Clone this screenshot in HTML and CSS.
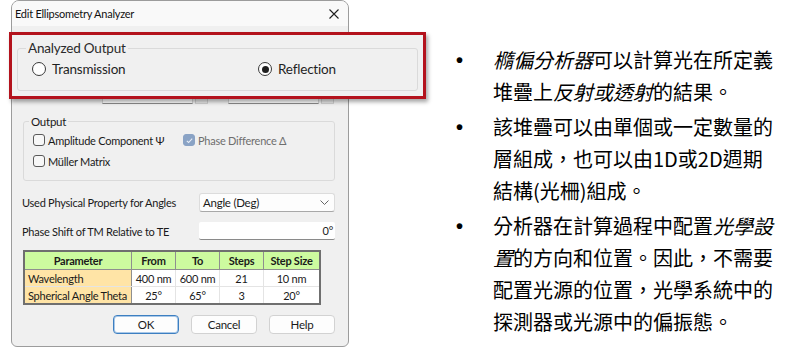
FILE: index.html
```html
<!DOCTYPE html>
<html lang="zh-Hant">
<head>
    <meta charset="UTF-8">
    <meta name="viewport" content="width=device-width, initial-scale=1.0">
    <title>Edit Ellipsometry Analyzer</title>
    <link rel="stylesheet" href="styles.css">
</head>
<body>
    <div class="page">
        <div class="dialog">
            <div class="titlebar">
                <span class="title">Edit Ellipsometry Analyzer</span>
                <svg class="close" width="10" height="10" viewBox="0 0 10 10">
                    <path d="M0.5 0.5 L9.5 9.5 M9.5 0.5 L0.5 9.5" stroke="#1f1f1f" stroke-width="1.1" fill="none"/>
                </svg>
            </div>
            <div class="dialog-body">
                <!-- row hidden behind the callout, only its lower edge shows -->
                <div class="hidden-row">
                    <div class="spin"><span class="spin-input"></span><span class="spin-btn"></span></div>
                    <div class="spin"><span class="spin-input"></span><span class="spin-btn"></span></div>
                </div>

                <fieldset class="group output-group">
                    <legend>Output</legend>
                    <div class="check-grid">
                        <div class="check"><span class="box"></span>Amplitude Component &Psi;</div>
                        <div class="check disabled">
                            <span class="box checked">
                                <svg width="9" height="9" viewBox="0 0 9 9"><path d="M1.8 4.8 L3.6 6.5 L7.2 2.6" stroke="#e8eef7" stroke-width="1.1" fill="none"/></svg>
                            </span>Phase Difference &Delta;
                        </div>
                        <div class="check"><span class="box"></span>Müller Matrix</div>
                    </div>
                </fieldset>

                <div class="prop-row combo-row">
                    <span>Used Physical Property for Angles</span>
                    <div class="combo">
                        <span>Angle (Deg)</span>
                        <svg width="9" height="5" viewBox="0 0 9 5"><path d="M0.5 0.5 L4.5 4.5 L8.5 0.5" stroke="#666" stroke-width="1" fill="none"/></svg>
                    </div>
                </div>
                <div class="prop-row text-row">
                    <span>Phase Shift of TM Relative to TE</span>
                    <div class="textbox">0°</div>
                </div>

                <table class="scan-table">
                    <thead>
                        <tr>
                            <th class="c-param">Parameter</th>
                            <th class="c-from">From</th>
                            <th class="c-to">To</th>
                            <th class="c-steps">Steps</th>
                            <th class="c-size">Step Size</th>
                        </tr>
                    </thead>
                    <tbody>
                        <tr>
                            <td>Wavelength</td>
                            <td>400 nm</td>
                            <td>600 nm</td>
                            <td>21</td>
                            <td>10 nm</td>
                        </tr>
                        <tr>
                            <td>Spherical Angle Theta</td>
                            <td>25°</td>
                            <td>65°</td>
                            <td>3</td>
                            <td>20°</td>
                        </tr>
                    </tbody>
                </table>

                <div class="buttons">
                    <button type="button" class="primary">OK</button>
                    <button type="button">Cancel</button>
                    <button type="button">Help</button>
                </div>
            </div>
        </div>

        <ul class="notes">
            <li><span><i>橢偏分析器</i>可以計算光在所定義<br>堆疊上<i>反射或透射</i>的結果。</span></li>
            <li><span>該堆疊可以由單個或一定數量的<br>層組成，也可以由1D或2D週期<br>結構(光柵)組成。</span></li>
            <li><span>分析器在計算過程中配置<i>光學設<br>置</i>的方向和位置。因此，不需要<br>配置光源的位置，光學系統中的<br>探測器或光源中的偏振態。</span></li>
        </ul>

        <!-- magnified callout over the dialog -->
        <div class="callout">
            <fieldset class="group analyzed-group">
                <legend>Analyzed Output</legend>
                <div class="radio-row">
                    <div class="radio"><span class="dot"></span>Transmission</div>
                    <div class="radio selected"><span class="dot"></span>Reflection</div>
                </div>
            </fieldset>
        </div>
    </div>
</body>
</html>
```

FILE: styles.css
```css
body {
    margin: 0;
    background-color: #fff;
    font-family: Lato, "Noto Sans", sans-serif;
    color: #1a1a1a;
}
.page {
    position: relative;
    display: flex;
    align-items: flex-start;
}

/* dialog */
.dialog {
    margin-left: 11px;
    width: 338px;
    height: 347px;
    box-sizing: border-box;
    border: 1px solid #9c9c9c;
    border-radius: 8px 8px 6px 6px;
    background-color: #f0f0f0;
    overflow: hidden;
    font-size: 11px;
    letter-spacing: -0.25px;
}
.titlebar {
    height: 25px;
    display: flex;
    align-items: center;
    justify-content: space-between;
    padding: 0 9px 0 3px;
    background-color: #f9f9f9;
}
.title {
    color: #111;
}
.close {
    display: block;
}
.dialog-body {
    padding: 0 13px 0 10px;
}
.hidden-row {
    margin-top: 58px;
    height: 20px;
    display: flex;
    gap: 20px;
    padding-left: 80px;
}
.spin {
    display: flex;
    gap: 2px;
}
.spin-input {
    width: 91px;
    height: 20px;
    box-sizing: border-box;
    background-color: #fff;
    border: 1px solid #d6d6d6;
    border-bottom-color: #8a8a8a;
}
.spin-btn {
    width: 13px;
    height: 20px;
    box-sizing: border-box;
    background-color: #e9e9e9;
    border: 1px solid #cfcfcf;
}

/* group boxes */
.group {
    margin: 0;
    border: 1px solid #dadada;
    border-radius: 3px;
}
.output-group {
    margin: 10px 0 0 1px;
    padding: 3px 8px 11px 9px;
}
.output-group legend {
    padding: 0 2px;
    margin-left: -4px;
    line-height: 15px;
    font-size: 11.5px;
}
.check-grid {
    display: grid;
    grid-template-columns: 150px auto;
    row-gap: 5px;
}
.check {
    display: flex;
    align-items: center;
    height: 16px;
    white-space: nowrap;
}
.box {
    width: 12px;
    height: 12px;
    box-sizing: border-box;
    border: 1px solid #5a5a5a;
    border-radius: 3px;
    background-color: #f7f7f7;
    margin-right: 3px;
    display: flex;
    align-items: center;
    justify-content: center;
}
.box.checked {
    border-color: #8aa3c5;
    background-color: #8aa3c5;
}
.check.disabled {
    color: #6e6e6e;
}

/* property rows */
.prop-row {
    display: grid;
    grid-template-columns: 177px 1fr;
    align-items: center;
}
.combo-row {
    margin-top: 12px;
}
.text-row {
    margin-top: 10px;
}
.combo {
    height: 19px;
    box-sizing: border-box;
    background-color: #fdfdfd;
    border: 1px solid #dcdcdc;
    border-bottom-color: #a8a8a8;
    border-radius: 3px;
    display: flex;
    align-items: center;
    justify-content: space-between;
    padding: 0 5px 0 3px;
    font-size: 11.5px;
}
.textbox {
    height: 18px;
    box-sizing: border-box;
    background-color: #fff;
    border-bottom: 1px solid #8a8a8a;
    border-radius: 2px;
    text-align: right;
    padding-right: 2px;
    line-height: 17px;
}

/* scan table */
.scan-table {
    margin: 10px 0 0 1px;
    width: 298px;
    border-collapse: collapse;
    border: 2px solid #6f6f6f;
    table-layout: fixed;
}
.scan-table th,
.scan-table td {
    padding: 0;
    text-align: center;
    white-space: nowrap;
}
.scan-table th {
    height: 17px;
    background-color: #cdfb9f;
    border: 1px solid #8f8f8f;
    font-weight: bold;
}
.scan-table td {
    height: 16px;
    background-color: #fff;
    border: 1px solid #e4e4e4;
}
.scan-table td:first-child {
    background-color: #ffe4a6;
    text-align: left;
    padding-left: 3px;
    border-right: 1px solid #8f8f8f;
}
.c-param { width: 106px; }
.c-from { width: 43px; }
.c-to { width: 43px; }
.c-steps { width: 43px; }

/* buttons */
.buttons {
    margin-top: 10px;
    display: flex;
    justify-content: flex-end;
    gap: 12px;
}
.buttons button {
    width: 66px;
    height: 19px;
    box-sizing: border-box;
    font-family: inherit;
    font-size: 11.5px;
    letter-spacing: inherit;
    color: #1a1a1a;
    background-color: #fdfdfd;
    border: 1px solid #d2d2d2;
    border-radius: 4px;
    padding: 0;
}
.buttons button.primary {
    border: 1px solid #3d7fc1;
    box-shadow: inset 0 0 0 1px #a9c8e8;
}

/* right side notes */
.notes {
    list-style: none;
    margin: 0 0 0 107px;
    padding: 44px 0 0 0;
    font-family: "Noto Sans CJK TC", sans-serif;
    font-size: 20px;
    line-height: 32px;
    color: #000;
}
.notes li {
    display: flex;
    margin-bottom: 3px;
    white-space: nowrap;
}
.notes li::before {
    content: "•";
    font-family: "Liberation Sans", sans-serif;
    font-weight: bold;
    width: 37px;
    flex: none;
}
.notes i {
    font-style: italic;
}

/* callout */
.callout {
    position: absolute;
    left: 9px;
    top: 32px;
    width: 417px;
    height: 67px;
    box-sizing: border-box;
    border: 3px solid #b3121c;
    background-color: #f0f0f0;
    box-shadow: 2px 3px 4px rgba(0, 0, 0, 0.35);
    padding: 5px;
}
.analyzed-group {
    height: 51px;
    box-sizing: border-box;
    padding: 0 0 0 14px;
    font-size: 13.5px;
    letter-spacing: -0.2px;
}
.analyzed-group legend {
    padding: 0 2px;
    margin-left: -6px;
    line-height: 16px;
    color: #2a2a2a;
}
.radio-row {
    display: grid;
    grid-template-columns: 226px auto;
    margin-top: 3px;
}
.radio {
    display: flex;
    align-items: center;
    height: 20px;
    color: #1f1f1f;
}
.dot {
    width: 14px;
    height: 14px;
    box-sizing: border-box;
    border: 1.5px solid #3a3a3a;
    border-radius: 50%;
    background-color: #fff;
    margin-right: 6px;
    display: flex;
    align-items: center;
    justify-content: center;
}
.radio.selected .dot::after {
    content: "";
    width: 7px;
    height: 7px;
    border-radius: 50%;
    background-color: #1f1f1f;
}
```
